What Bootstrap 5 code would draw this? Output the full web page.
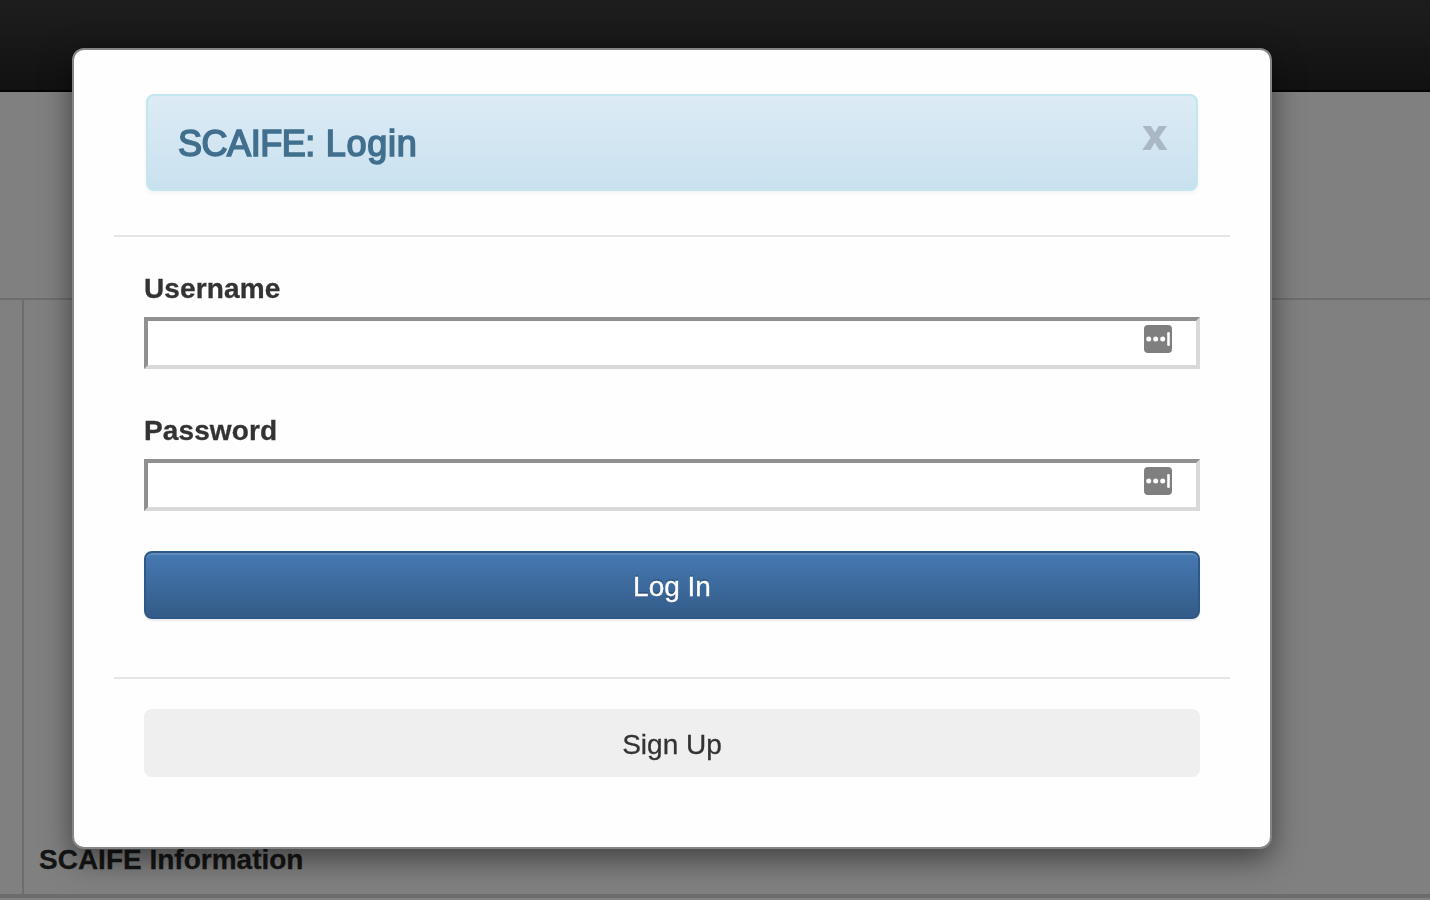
<!DOCTYPE html>
<html lang="en">
<head>
<meta charset="utf-8">
<meta name="viewport" content="width=device-width, initial-scale=1">
<title>SCAIFE: Login</title>
<link href="https://cdn.jsdelivr.net/npm/bootstrap@5.3.0/dist/css/bootstrap.min.css" rel="stylesheet">
<style>
body { font-family: "Liberation Sans", Arial, sans-serif; font-size: 28px; line-height: 40px; color: #333; background: #808080; }
.top-bar { height: 92px; background: linear-gradient(#1e1e1e, #111); border-bottom: 2px solid #040404; }
.intro { height: 208px; border-bottom: 2px solid #6e6e6e; }
.panel-area { height: 594px; }
.side-gutter { width: 24px; border-right: 2px solid #6e6e6e; }
.info-title { color: #151515; padding: 0 0 14px 15px; -webkit-text-stroke: .3px; }
.bottom-rule { height: 4px; background: #6c6c6c; }
.modal-dialog.login-dialog { width: 1200px; max-width: none; margin: 48px 0 0 72px; }
.login-content { height: 801px; border: 2px solid #858585; border-radius: 12px; background: #fefefe; background-clip: border-box; box-shadow: 0 10px 30px rgba(0,0,0,.5); padding: 44px 40px 0; color: #333; }
.title-box { height: 97px; margin: 0 32px 44px; padding: 0 30px; border: 2px solid #c3e6ef; border-radius: 8px; background: linear-gradient(#dcebf5, #c9e1ef); box-shadow: 0 2px 4px rgba(0,0,0,.05); }
.title-text { font-size: 36px; line-height: 40px; font-weight: 400; color: #416f8e; -webkit-text-stroke: 1.6px #416f8e; letter-spacing: .75px; padding-top: 2px; }
.title-app { letter-spacing: -.45px; }
.close-x { font-family: "Liberation Sans", Arial, sans-serif; font-size: 40px; line-height: 42px; font-weight: 700; color: #a9b8c4; -webkit-text-stroke: 1.8px #a9b8c4; text-shadow: 0 2px 0 #dbe9f2; padding: 0; margin-top: -16px; }
.divider { height: 2px; background: #e5e5e5; }
.login-form { padding: 32px 30px 0; }
.field-label { height: 40px; line-height: 40px; font-weight: 700; color: #333; margin-bottom: 8px; letter-spacing: .12px; -webkit-text-stroke: .3px; }
.field-input { height: 52px; border: 4px solid; border-color: #909090 #d9d9d9 #d9d9d9 #909090; border-radius: 0; background: #fff; }
.field-input:focus { box-shadow: none; border-color: #909090 #d9d9d9 #d9d9d9 #909090; }
.key-icon { right: 28px; top: 8px; width: 28px; height: 28px; }
.field-group { height: 142px; }
.field-group-last { height: 140px; }
.wide-btn { height: 68px; font-size: 28px; line-height: 40px; border-radius: 8px; padding: 3px 0 0; -webkit-text-stroke: .3px; }
.login-btn { display: block; margin-bottom: 58px; color: #fff; border: 2px solid #2e5887; background: linear-gradient(#4679b3, #335b87); box-shadow: inset 0 2px 0 rgba(255,255,255,.15), 0 2px 2px rgba(0,0,0,.075); text-shadow: 0 -2px 0 rgba(0,0,0,.2); }
.login-btn:hover { color: #fff; border-color: #2e5887; }
.signup-area { padding: 30px 30px 0; }
.signup-btn { background: #efefef; color: #333; border: 0; }
</style>
</head>
<body class="overflow-hidden">
<header class="top-bar"></header>
<div class="intro"></div>
<main class="panel-area d-flex">
  <div class="side-gutter"></div>
  <div class="d-flex align-items-end"><strong class="info-title">SCAIFE Information</strong></div>
</main>
<div class="bottom-rule"></div>

<div class="modal d-block overflow-hidden" tabindex="-1" role="dialog" aria-labelledby="loginTitle">
  <div class="modal-dialog login-dialog">
    <div class="modal-content login-content">
      <div class="title-box d-flex justify-content-between align-items-center">
        <h4 class="title-text m-0" id="loginTitle"><span class="title-app">SCAIFE:</span> Login</h4>
        <button type="button" class="btn border-0 close-x" aria-label="Close">x</button>
      </div>
      <div class="divider"></div>
      <form class="login-form">
        <div class="field-group">
          <label class="field-label d-block" for="username">Username</label>
          <div class="position-relative">
            <input class="form-control field-input" id="username" type="text">
            <svg class="key-icon position-absolute" viewBox="0 0 28 28" aria-hidden="true"><rect width="28" height="28" rx="4" fill="#7f7f7f"/><g fill="#fff"><circle cx="4.7" cy="14" r="2.5"/><circle cx="11.7" cy="14" r="2.5"/><circle cx="18.7" cy="14" r="2.5"/><rect x="23.2" y="7" width="2.6" height="14" rx="1.2"/></g></svg>
          </div>
        </div>
        <div class="field-group-last">
          <label class="field-label d-block" for="password">Password</label>
          <div class="position-relative">
            <input class="form-control field-input" id="password" type="password">
            <svg class="key-icon position-absolute" viewBox="0 0 28 28" aria-hidden="true"><rect width="28" height="28" rx="4" fill="#7f7f7f"/><g fill="#fff"><circle cx="4.7" cy="14" r="2.5"/><circle cx="11.7" cy="14" r="2.5"/><circle cx="18.7" cy="14" r="2.5"/><rect x="23.2" y="7" width="2.6" height="14" rx="1.2"/></g></svg>
          </div>
        </div>
        <button type="button" class="btn wide-btn login-btn w-100">Log In</button>
      </form>
      <div class="divider"></div>
      <div class="signup-area"><button type="button" class="btn wide-btn signup-btn w-100">Sign Up</button></div>
    </div>
  </div>
</div>
<script src="https://cdn.jsdelivr.net/npm/bootstrap@5.3.0/dist/js/bootstrap.bundle.min.js"></script>
</body>
</html>
